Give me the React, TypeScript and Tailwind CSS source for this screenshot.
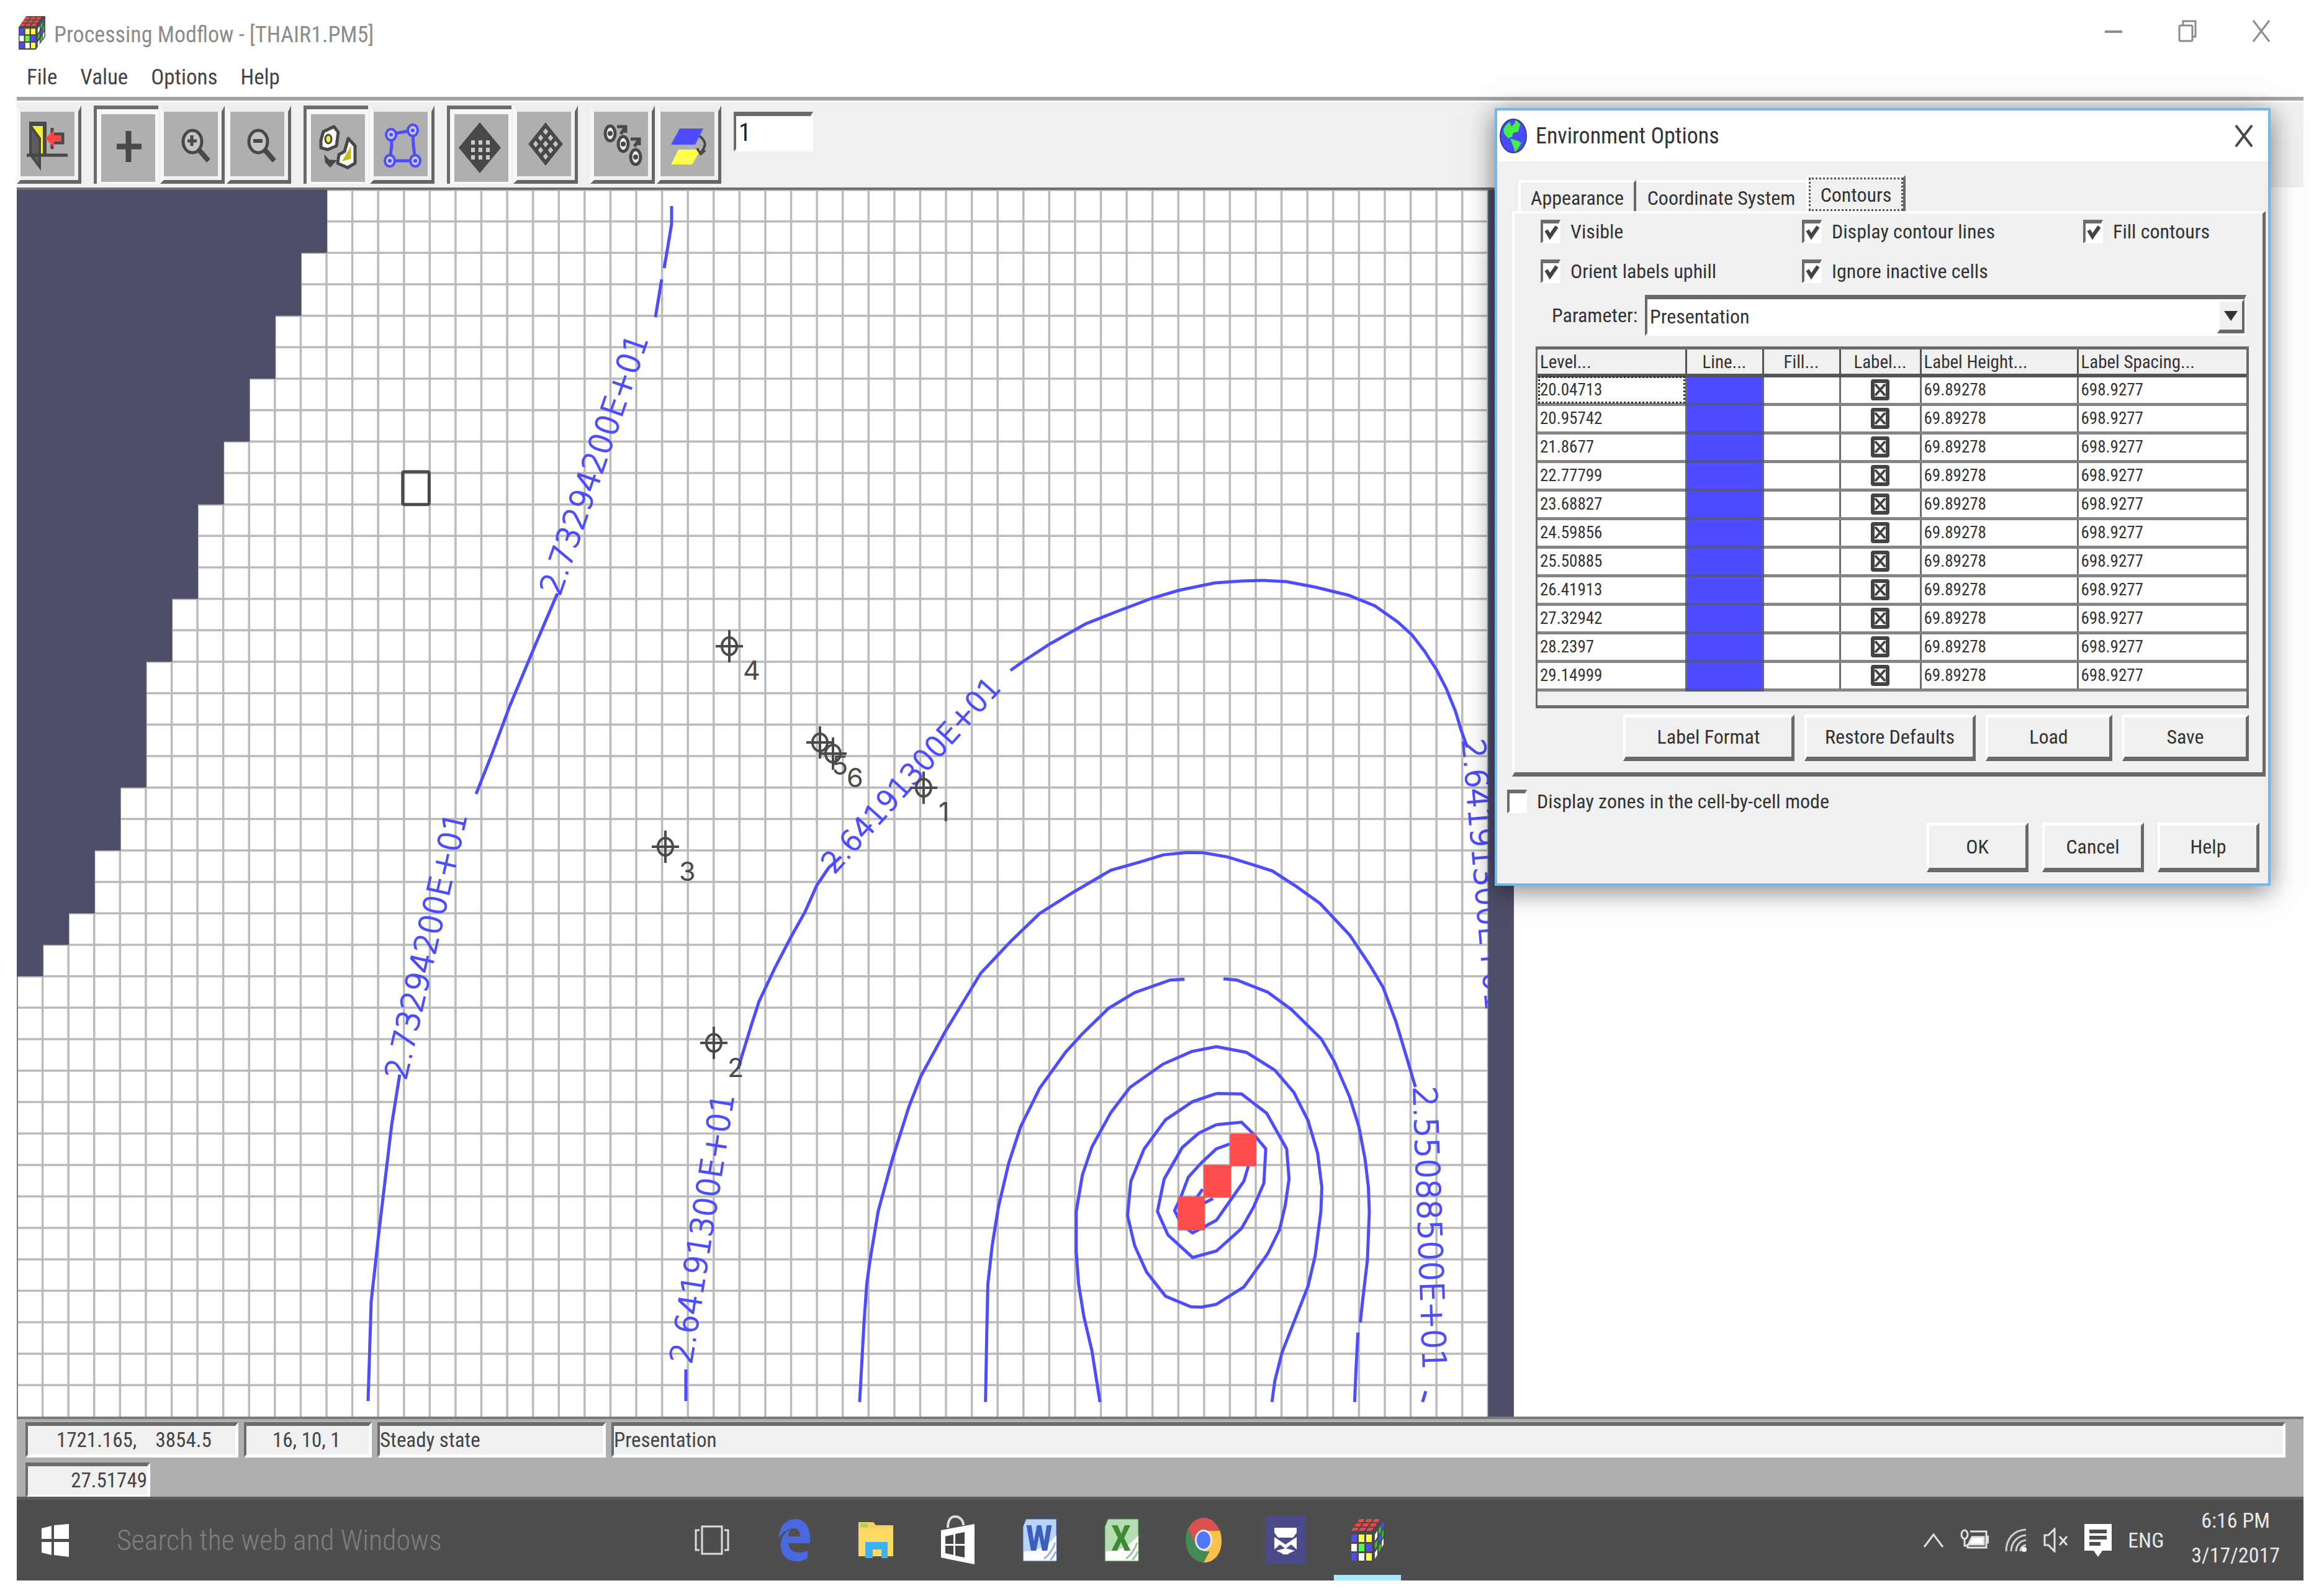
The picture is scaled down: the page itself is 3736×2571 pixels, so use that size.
import type { ReactNode } from "react";

const COLS = 58;
const ROWS = 39;
const MAP = { x: 27, y: 305, w: 2412, h: 1976 };
const CW = MAP.w / COLS;
const CH = MAP.h / ROWS;
const BLUE = "#4d4dff";
const INK = "#4a4a4a";

/* Inactive rows per column, from the left edge of the grid. */
const INACTIVE = [25, 24, 23, 21, 19, 15, 13, 10, 8, 6, 4, 2];

const colX = (c: number) => MAP.x + c * CW;
const rowY = (r: number) => MAP.y + r * CH;

const CONTOURS = [
  "111,1472 120,1280 126,1180 133,1120 150,1000 180,870 215,740 240,665 291,555 366,410 430,330 490,262 560,210 640,155 700,135 750,117 800,111 835,112 885,122 930,138 980,157 1030,195 1080,237 1143,316 1185,390 1213,445 1240,530 1268,640 1281,692",
  "376,1472 379,1280 381,1180 390,1085 403,990 425,880 450,790 490,695 545,605 580,560 635,497 690,458 765,427 795,425",
  "877,424 905,427 970,457 1020,500 1083,573 1110,628 1142,715 1162,790 1175,870 1182,940 1184,1000 1180,1120 1170,1220 1165,1275",
  "1160,1300 1156,1390 1153,1472",
  "617,1472 600,1345 583,1260 572,1180 567,1100 567,1000 580,910 600,840 640,755 680,693 750,635 810,604 862,592 925,606 985,650 1025,705 1055,775 1075,855 1084,940 1082,1000 1070,1110 1055,1185 1030,1260 1000,1350 985,1420 979,1472",
  "862,708 915,709 968,757 1010,845 1015,920 1007,985 995,1045 970,1105 920,1187 862,1230 830,1237 808,1236 755,1210 715,1150 690,1085 675,1010 682,925 710,845 755,773 812,728 862,708",
  "862,785 915,779 940,808 966,845 962,930 940,990 915,1042 862,1098 812,1114 760,1058 738,1000 752,920 790,842 825,806 862,785",
  "890,833 862,845 830,880 803,915 787,965 774,998 790,1035 812,1053 862,1022 890,975 920,925 930,885 935,860",
  "833,945 815,975 800,1000 835,980 855,968",
  "1303,1445 1296,1472",
];

const OUTER_CONTOURS = [
  "1082,331 1082,360 1076,396 1070,431",
  "1066,449 1056,510",
  "898,955 862,1039 821,1137 792,1215 767,1278",
  "644,1730 631,1811 610,1988 598,2096 593,2256",
  "1105,2256 1105,2205",
  "1189,1721 1195,1701 1210,1652 1223,1612 1249,1557 1274,1509 1297,1468 1316,1425 1335,1397 1355,1379",
  "1628,1079 1649,1064 1692,1036 1749,1004 1797,985 1855,963 1899,950 1957,938 2000,935 2035,934 2073,936 2120,945 2173,958 2215,975 2252,1001 2275,1022 2295,1048 2315,1079 2330,1108 2345,1145 2354,1175 2364,1203",
];

const CONTOUR_LABELS = [
  { t: "2.73294200E+01", x: 902, y: 960, a: -71, s: 50 },
  { t: "2.73294200E+01", x: 654, y: 1740, a: -77, s: 50 },
  { t: "2.64191300E+01", x: 1114, y: 2197, a: -81, s: 50 },
  { t: "2.64191300E+01", x: 1344, y: 1408, a: -48, s: 46 },
  { t: "2.55088500E+01", x: 2277, y: 1750, a: 88, s: 52 },
  { t: "2.64191300E+01", x: 2356, y: 1191, a: 85, s: 50 },
];

const WELLS = [
  { n: "4", x: 1175, y: 1040, tx: 1197, ty: 1094 },
  { n: "5", x: 1321, y: 1195, tx: 1340, ty: 1247 },
  { n: "6", x: 1342, y: 1213, tx: 1364, ty: 1267 },
  { n: "1", x: 1488, y: 1268, tx: 1512, ty: 1322 },
  { n: "3", x: 1072, y: 1363, tx: 1094, ty: 1418 },
  { n: "2", x: 1150, y: 1679, tx: 1172, ty: 1734 },
];

const LEVELS = [
  "20.04713", "20.95742", "21.8677", "22.77799", "23.68827", "24.59856",
  "25.50885", "26.41913", "27.32942", "28.2397", "29.14999",
];

function ModelMap() {
  return (
    <svg
      role="img"
      aria-label="Model grid with head contours"
      viewBox="27 305 2412 1976"
      preserveAspectRatio="none"
      className="block h-[1976px] w-[65.47%] bg-white"
    >
      <g stroke="#bababa" strokeWidth="3.5">
        {Array.from({ length: COLS }, (_, c) => (
          <line key={c} x1={colX(c)} x2={colX(c)} y1={MAP.y} y2={MAP.y + MAP.h} />
        ))}
        {Array.from({ length: ROWS }, (_, r) => (
          <line key={r} x1={MAP.x} x2={MAP.x + MAP.w} y1={rowY(r)} y2={rowY(r)} />
        ))}
      </g>
      <line x1="28" x2="28" y1={MAP.y} y2={MAP.y + MAP.h} stroke="#7c7c7c" strokeWidth="2" />
      <g fill="#4e4e69">
        {INACTIVE.map((n, c) => (
          <rect key={c} x={colX(c)} y={MAP.y} width={CW + 1} height={n * CH} />
        ))}
      </g>
      <g fill="none" stroke={BLUE} strokeWidth="5">
        <g transform="translate(1300 1300) scale(.7653 .6505)">
          {CONTOURS.map((p) => (
            <polyline key={p} points={p} vectorEffect="non-scaling-stroke" />
          ))}
        </g>
        {OUTER_CONTOURS.map((p) => (
          <polyline key={p} points={p} />
        ))}
      </g>
      <g fill={BLUE} stroke={BLUE} strokeWidth="2" className="font-['DejaVu_Sans',sans-serif] font-extralight">
        {CONTOUR_LABELS.map((l, i) => (
          <text key={i} fontSize={l.s} transform={`translate(${l.x} ${l.y}) rotate(${l.a})`}>{l.t}</text>
        ))}
      </g>
      <rect x={colX(57)} y={MAP.y} width={CW} height={MAP.h} fill="#4e4e69" />
      <g fill="#ff4d4d">
        <rect x={colX(45) - 1} y={rowY(32)} width={CW + 2} height={CH + 4} />
        <rect x={colX(46) - 1} y={rowY(31)} width={CW + 3} height={CH + 2} />
        <rect x={colX(47)} y={rowY(30)} width={CW + 1} height={CH + 2} />
      </g>
      <rect x={colX(15) - 2} y={rowY(9) - 2} width={CW + 1} height={CH + 2} fill="none" stroke={INK} strokeWidth="5" rx="2" />
      {WELLS.map((w) => (
        <g key={w.n}>
          <g stroke={INK} strokeWidth="4" fill="none">
            <ellipse cx={w.x} cy={w.y} rx="12" ry="14" />
            <path d={`M${w.x - 22} ${w.y}h44M${w.x} ${w.y - 26}v52`} />
          </g>
          <text x={w.tx} y={w.ty} fontSize="43" fill={INK} className="font-['Inter',sans-serif]">{w.n}</text>
        </g>
      ))}
    </svg>
  );
}

function ToolButton({ label, pressed, view, children }: { label: string; pressed?: boolean; view: string; children: ReactNode }) {
  return (
    <button
      type="button"
      aria-label={label}
      aria-pressed={!!pressed}
      className={
        "flex h-[126px] w-[104px] items-center justify-center bg-[#afafaf] " +
        (pressed
          ? "border-l-[5px] border-t-[6px] border-l-[#6b6b6b] border-t-[#6b6b6b] shadow-[inset_7px_8px_0_#f7f7f7,inset_-5px_-3px_0_#f7f7f7]"
          : "border-b-[6px] border-l-[6px] border-r-[5px] border-t-[10px] border-b-[#666] border-l-[#f7f7f7] border-r-[#666] border-t-[#ededed] shadow-[inset_-6px_-6px_0_#f1f1f1]")
      }
    >
      <svg viewBox={view} className="h-[100px] w-[84px] shrink-0" fill="none" aria-hidden="true">{children}</svg>
    </button>
  );
}

const BLACK = "#484848";

function Toolbar() {
  return (
    <div role="toolbar" aria-label="Tools" className="flex h-[140px] items-start gap-5 border-t-[3px] border-white bg-[#f0f0f0] pt-[5px]">
      <ToolButton label="Leave editor" view="37 184 84 100">
        <path d="M49 198h22v50H49z" fill={BLACK} stroke={BLACK} strokeWidth="6" />
        <path d="M51 202h17v45h-5v-28z" fill="#f4ee3a" />
        <path d="M48 203l15 19v46l-15-20z" fill="#5c5c5c" stroke={BLACK} strokeWidth="4" />
        <path d="M42 249h66" stroke={BLACK} strokeWidth="5" />
        <path d="M83 205v34M83 215h17v14H83" stroke={BLACK} strokeWidth="5" />
        <path d="M72 222l14-13v8h11v10H86v9z" fill="#ff4646" />
      </ToolButton>
      <div className="flex gap-[3px]">
        <ToolButton label="Assign value" pressed view="162 184 84 100">
          <path d="M186 234h40M205 209v50" stroke={BLACK} strokeWidth="9" />
        </ToolButton>
        <ToolButton label="Zoom in" view="266 184 84 100">
          <ellipse cx="307" cy="227" rx="15" ry="18" fill="#c4c4c4" stroke={BLACK} strokeWidth="5" />
          <path d="M299 226h15M306 217v17" stroke={BLACK} strokeWidth="5" />
          <path d="M318 241l15 17" stroke={BLACK} strokeWidth="8" />
        </ToolButton>
        <ToolButton label="Zoom out" view="370 184 84 100">
          <ellipse cx="410" cy="227" rx="15" ry="18" fill="#c4c4c4" stroke={BLACK} strokeWidth="5" />
          <path d="M402 226h15" stroke={BLACK} strokeWidth="6" />
          <path d="M421 241l15 17" stroke={BLACK} strokeWidth="8" />
        </ToolButton>
      </div>
      <div className="flex gap-[3px]">
        <ToolButton label="Zones" pressed view="502 184 84 100">
          <path d="M538 202l7 9-3 22-14 6-11-3 0-12 4-14z" fill="#fff" stroke={BLACK} strokeWidth="5" strokeLinejoin="round" />
          <ellipse cx="529" cy="222" rx="5" ry="7" fill="#f4ee3a" stroke={BLACK} strokeWidth="3" />
          <path d="M561 221l11 12v28l-12 7-16-7 2-14 9-5z" fill="#fff" stroke={BLACK} strokeWidth="5" strokeLinejoin="round" />
          <path d="M556 254l7-12v10z" fill="#f4ee3a" stroke="#c4bc20" strokeWidth="5" />
          <path d="M522 246l8 9 13 1-11 12-8-8z" fill={BLACK} />
        </ToolButton>
        <ToolButton label="Polygons" view="604 184 84 100">
          <path d="M627 215l35-6 1 24 3 25h-41l3-25z" stroke={BLUE} strokeWidth="5" />
          <g fill="#c8c8ff" stroke={BLUE} strokeWidth="4">
            <ellipse cx="627" cy="216" rx="8" ry="9" /><ellipse cx="662" cy="209" rx="8" ry="9" />
            <ellipse cx="666" cy="258" rx="8" ry="9" /><ellipse cx="625" cy="258" rx="8" ry="9" />
          </g>
          <g fill={BLUE}><circle cx="627" cy="216" r="3" /><circle cx="662" cy="209" r="3" /><circle cx="666" cy="258" r="3" /><circle cx="625" cy="258" r="3" /></g>
        </ToolButton>
      </div>
      <div className="flex gap-[3px]">
        <ToolButton label="Cell by cell input" pressed view="735 184 84 100">
          <path d="M775 195l34 41-34 41-34-41z" fill={BLACK} />
          <g fill="#c8c8c8">
            {[761, 773, 785].map((x) => [224, 236, 248].map((y) => <rect key={`${x}-${y}`} x={x} y={y} width="6" height="7" />))}
          </g>
        </ToolButton>
        <ToolButton label="Grid outline" view="837 184 84 100">
          <path d="M878 201l24 30-24 30-24-30z" stroke={BLACK} strokeWidth="6" fill="#c4c4c4" />
          <path d="M870 211l24 30M862 221l24 30M886 211l-24 30M894 221l-24 30" stroke={BLACK} strokeWidth="6" />
        </ToolButton>
      </div>
      <div className="flex gap-[3px]">
        <ToolButton label="Duplicate cells" view="963 184 84 100">
          <g fill="#eee" stroke={BLACK} strokeWidth="5">
            <ellipse cx="984" cy="214" rx="8" ry="12" /><ellipse cx="1005" cy="231" rx="8" ry="12" /><ellipse cx="1025" cy="252" rx="8" ry="12" />
          </g>
          <g fill={BLACK}><circle cx="984" cy="214" r="4" /><circle cx="1005" cy="231" r="4" /><circle cx="1025" cy="252" r="4" /></g>
          <path d="M995 203h14v10M1009 203l-8 12M1017 223h14v10M1031 223l-8 12" stroke={BLACK} strokeWidth="5" />
        </ToolButton>
        <ToolButton label="Duplicate layers" view="1070 184 84 100">
          <path d="M1096 206h38l-13 26h-39z" fill={BLUE} />
          <path d="M1094 240h36l-14 24h-34z" fill="#ffff4d" />
          <path d="M1128 218c12 10 10 16 3 26M1124 238l6 9 7-6" stroke={BLACK} strokeWidth="4" />
        </ToolButton>
      </div>
      <input
        aria-label="Layer"
        defaultValue="1"
        className="mt-[10px] h-[64px] w-[128px] border-b-4 border-l-4 border-r-4 border-t-[7px] border-b-white border-l-[#6b6b6b] border-r-white border-t-[#6b6b6b] bg-white pl-1 text-[40px] leading-10 text-[#222]"
      />
    </div>
  );
}

function CubeIcon({ className }: { className: string }) {
  const front = ["#4d4dff", "#ffff4d", "#ffff4d", "#fff", "#4dff4d", "#4d4dff", "#4d4dff", "#fff", "#ffff4d"];
  return (
    <svg viewBox="0 0 56 72" preserveAspectRatio="none" className={className} aria-hidden="true">
      <path d="M0 24L16 0h40v44L36 72H0z" fill="#4a4a4a" />
      {front.map((f, i) => (
        <rect key={i} x={2 + (i % 3) * 12} y={27 + Math.floor(i / 3) * 15} width="9" height="12" fill={f} />
      ))}
      {[0, 1, 2].map((r) => [0, 1, 2].map((c) => (
        <path key={`${r}${c}`} d={`M${15 - r * 5 + c * 12} ${2 + r * 7}h9l-3 5h-9z`} fill="#f04848" />
      )))}
      <path d="M40 27l4-6v10l-4 6zM40 56l4-6v10l-4 6zM51 38l3-5v10l-3 5z" fill="#fff" />
      <path d="M40 41l4-6v10l-4 6zM46 46l4-6v10l-4 6zM51 24l3-5v10l-3 5zM46 18l4-6v10l-4 6z" fill="#38c038" />
      <path d="M51 10l3-5v10l-3 5zM46 32l4-6v10l-4 6z" fill="#4d4dff" />
    </svg>
  );
}

function CheckBox({ label, checked, className }: { label: string; checked?: boolean; className?: string }) {
  return (
    <label className={"flex items-center gap-4 " + (className ?? "")}>
      <span className="relative block h-[38px] w-8">
        <input
          type="checkbox"
          defaultChecked={checked}
          className="peer block h-full w-full appearance-none border-b-[3px] border-l-4 border-r-[3px] border-t-[6px] border-b-white border-l-[#6b6b6b] border-r-white border-t-[#6b6b6b] bg-white"
        />
        <svg viewBox="0 0 32 38" className="pointer-events-none absolute inset-0 hidden h-full w-full peer-checked:block" fill="none" aria-hidden="true">
          <path d="M9 17l6 10 11-16" stroke="#444" strokeWidth="6" />
        </svg>
      </span>
      <span>{label}</span>
    </label>
  );
}

function PushButton({ children, className }: { children: ReactNode; className: string }) {
  return (
    <button
      type="button"
      className={"border-b-[7px] border-l-4 border-r-[5px] border-t-[5px] border-b-[#696969] border-l-white border-r-[#696969] border-t-white bg-[#f0f0f0] text-center " + className}
    >
      {children}
    </button>
  );
}

function EnvironmentDialog() {
  return (
    <section
      role="dialog"
      aria-label="Environment Options"
      className="absolute right-[78px] top-[174px] w-[1250px] border-4 border-[#72b8ea] bg-[#f0f0f0] pb-[18px] text-[32px] leading-10 text-[#333] shadow-[0_8px_40px_rgba(0,0,0,0.5)]"
    >
      <header className="flex h-[82px] items-center bg-white pl-1 pr-6 text-[36px]">
        <svg viewBox="0 0 44 56" className="h-14 w-11" aria-hidden="true">
          <ellipse cx="22" cy="28" rx="21" ry="27" fill="#4a4aff" stroke="#3b3b8a" strokeWidth="2" />
          <path d="M9 12l7-7 3 8 5-5 2-6 7 7-3 12-8 2-2 6-6 3-7-8-1-6z" fill="#45f045" />
          <path d="M17 32l12 4 6 3-5 9-5 6-3-9z" fill="#45f045" />
        </svg>
        <h2 className="ml-[14px]">Environment Options</h2>
        <button type="button" aria-label="Close" className="ml-auto">
          <svg viewBox="0 0 30 36" className="h-9 w-[30px]" aria-hidden="true"><path d="M2 1l26 34M28 1L2 35" stroke="#484848" strokeWidth="4" /></svg>
        </button>
      </header>

      <div role="tablist" className="mt-[26px] flex h-[54px] items-end pl-[34px]">
        <button role="tab" type="button" className="h-[50px] w-[190px] border-l-4 border-r-4 border-t-4 border-l-white border-r-[#696969] border-t-white pt-1">Appearance</button>
        <button role="tab" type="button" className="h-[50px] w-[274px] border-t-4 border-white pt-1">Coordinate System</button>
        <button role="tab" type="button" aria-selected="true" className="h-[58px] w-[160px] border-l-4 border-r-4 border-t-4 border-l-white border-r-[#696969] border-t-white">
          <span className="block h-full border-[3px] border-dotted border-[#555] leading-[50px]">Contours</span>
        </button>
      </div>

      <div role="tabpanel" className="ml-[24px] mr-1 border-b-[7px] border-l-4 border-r-[5px] border-t-4 border-b-[#696969] border-l-white border-r-[#696969] border-t-white pb-[18px] pl-[34px] pr-[22px] pt-[9px]">
        <div className="grid grid-cols-[421px_453px_1fr] gap-y-[24px] pl-2">
          <CheckBox label="Visible" checked />
          <CheckBox label="Display contour lines" checked />
          <CheckBox label="Fill contours" checked />
          <CheckBox label="Orient labels uphill" checked />
          <CheckBox label="Ignore inactive cells" checked />
        </div>

        <div className="mt-[18px] flex items-center pl-[26px]">
          <label htmlFor="parameter" className="w-[150px]">Parameter:</label>
          <div className="relative mr-1 flex-1">
            <select id="parameter" className="h-[66px] w-full appearance-none border-b-4 border-l-4 border-r-[3px] border-t-[7px] border-b-white border-l-[#696969] border-r-white border-t-[#696969] bg-white pl-1">
              <option>Presentation</option>
            </select>
            <span className="pointer-events-none absolute bottom-1 right-[3px] top-[7px] flex w-[44px] items-center justify-center border-b-[6px] border-l-4 border-r-4 border-t-4 border-b-[#696969] border-l-white border-r-[#696969] border-t-white bg-[#f0f0f0]">
              <svg viewBox="0 0 22 16" className="h-4 w-[22px]" aria-hidden="true"><path d="M0 0h22L11 16z" fill="#333" /></svg>
            </span>
          </div>
        </div>

        <div className="mt-[17px] border-b-[5px] border-l-[3px] border-r-[4px] border-t-[5px] border-[#6b6b6b] bg-[#f0f0f0] pb-[22px]">
          <table className="w-full table-fixed border-collapse bg-white text-[27px] leading-[30px]">
            <colgroup>
              <col className="w-[239px]" /><col className="w-[124px]" /><col className="w-[124px]" /><col className="w-[130px]" /><col className="w-[253px]" /><col />
            </colgroup>
            <thead>
              <tr className="h-[42px] border-b-[6px] border-[#555] bg-[#f0f0f0] text-[29px]">
                <th className="border-r-[3px] border-[#555] pl-1 text-left font-normal">Level...</th>
                <th className="border-r-[3px] border-[#555] font-normal">Line...</th>
                <th className="border-r-[3px] border-[#555] font-normal">Fill...</th>
                <th className="border-r-[3px] border-[#555] font-normal">Label...</th>
                <th className="border-r-[3px] border-[#555] pl-1 text-left font-normal">Label Height...</th>
                <th className="pl-1 text-left font-normal">Label Spacing...</th>
              </tr>
            </thead>
            <tbody>
              {LEVELS.map((level, i) => (
                <tr key={level} className="h-[46px] border-b-[5px] border-[#858585]">
                  <td className={"border-r-[3px] border-[#6b6b6b] pl-1 " + (i === 0 ? "outline-[3px] -outline-offset-4 outline-dotted outline-[#333]" : "")}>{level}</td>
                  <td className="border-r-[3px] border-r-[#6b6b6b] border-b-[5px] border-b-[#55558a] bg-[#4d4dff]" />
                  <td className="border-r-[3px] border-[#6b6b6b]" />
                  <td className="border-r-[3px] border-[#6b6b6b]">
                    <span className="relative mx-auto block h-[34px] w-[30px]">
                      <input type="checkbox" defaultChecked aria-label={`Label ${level}`} className="peer block h-full w-full appearance-none rounded-sm border-[6px] border-[#444] bg-white" />
                      <svg viewBox="0 0 30 34" className="pointer-events-none absolute inset-0 hidden h-full w-full peer-checked:block" aria-hidden="true">
                        <path d="M7 8l16 18M23 8L7 26" stroke="#444" strokeWidth="4" />
                      </svg>
                    </span>
                  </td>
                  <td className="border-r-[3px] border-[#6b6b6b] pl-1">69.89278</td>
                  <td className="pl-1">698.9277</td>
                </tr>
              ))}
            </tbody>
          </table>
        </div>

        <div className="mt-[10px] flex justify-end gap-4">
          <PushButton className="h-[75px] w-[276px]">Label Format</PushButton>
          <PushButton className="h-[75px] w-[276px]">Restore Defaults</PushButton>
          <PushButton className="h-[75px] w-[204px]">Load</PushButton>
          <PushButton className="h-[75px] w-[204px]">Save</PushButton>
        </div>
      </div>

      <CheckBox label="Display zones in the cell-by-cell mode" className="ml-4 mt-[20px]" />
      <div className="mr-[14px] mt-[14px] flex justify-end gap-[22px]">
        <PushButton className="h-[80px] w-[164px]">OK</PushButton>
        <PushButton className="h-[80px] w-[164px]">Cancel</PushButton>
        <PushButton className="h-[80px] w-[164px]">Help</PushButton>
      </div>
    </section>
  );
}

function StatusCell({ children, className }: { children: ReactNode; className: string }) {
  return (
    <div className={"h-[57px] whitespace-pre border-b-[5px] border-l-4 border-r-[5px] border-t-[6px] border-b-white border-l-[#6b6b6b] border-r-white border-t-[#6b6b6b] bg-[#f0f0f0] leading-[46px] " + className}>
      {children}
    </div>
  );
}

function TaskIcon({ label, children, active }: { label: string; children: ReactNode; active?: boolean }) {
  return (
    <button type="button" aria-label={label} className={"flex h-full w-[108px] items-center justify-center " + (active ? "border-b-[9px] border-[#a5eaff] pt-[9px]" : "")}>
      {children}
    </button>
  );
}

function OfficeIcon({ letter, ink, tint }: { letter: string; ink: string; tint: string }) {
  return (
    <svg viewBox="0 0 58 72" className="h-[72px] w-[58px]" aria-hidden="true">
      <path d="M7 2h49v68H2V14z" fill={tint} stroke={ink} strokeWidth="1" />
      <path d="M3 54c18 0 38-6 53-26v41H3z" fill="#fff" />
      <path d="M36 66c8-6 14-14 18-26M46 68c4-4 7-8 9-14" stroke={ink} strokeWidth="3" fill="none" opacity=".5" />
      <text x="28" y="53" textAnchor="middle" fontSize="58" fill={ink} className="font-['Roboto_Condensed',sans-serif] font-bold">{letter}</text>
    </svg>
  );
}

function Taskbar() {
  return (
    <footer className="flex h-[135px] items-stretch border-t-[5px] border-[#5c5c5c] bg-[#4e4e4e] text-[34px] text-[#e8e8e8]">
      <button type="button" aria-label="Start" className="flex w-[129px] items-center pl-[40px]">
        <svg viewBox="0 0 44 53" className="h-[53px] w-11" fill="#fff" aria-hidden="true">
          <path d="M0 7l16-4v21H0zM20 2l24-2v24H20zM0 29h16v21L0 46zM20 29h24v24l-24-3z" />
        </svg>
      </button>
      <input aria-label="Search" placeholder="Search the web and Windows" className="w-[937px] bg-transparent pl-8 text-[46px] font-light placeholder:text-[#7f7f7f]" />
      <div className="flex gap-6">
        <TaskIcon label="Task view">
          <svg viewBox="0 0 56 48" className="h-12 w-14" fill="none" stroke="#ddd" strokeWidth="3" aria-hidden="true">
            <rect x="12" y="2" width="32" height="44" /><path d="M8 8H2v32h6M48 8h6v32h-6" />
          </svg>
        </TaskIcon>
        <TaskIcon label="Edge">
          <svg viewBox="0 0 52 68" className="h-[68px] w-[52px]" aria-hidden="true">
            <path d="M1 31C3 12 13 0 28 0c16 0 24 13 24 30v9H17c1 10 8 15 17 15 6 0 10-1 14-3v12c-5 3-11 5-18 5C14 68 5 57 5 42c0-12 6-21 16-26-3 4-4 7-4 12h19c0-8-3-13-10-13C16 15 7 21 1 31z" fill="#4a68e0" />
          </svg>
        </TaskIcon>
        <TaskIcon label="File Explorer">
          <svg viewBox="0 0 58 62" className="h-[62px] w-[58px]" aria-hidden="true">
            <path d="M1 2h24l4 5h28v50H1z" fill="#f8d05c" /><path d="M4 4h12v6H4z" fill="#9fd46a" /><path d="M1 12h56v45H1z" fill="#ffd966" />
            <path d="M12 34h36v26H38V46H24v14H12z" fill="#3fb0f0" />
          </svg>
        </TaskIcon>
        <TaskIcon label="Store">
          <svg viewBox="0 0 56 80" className="h-20 w-14" aria-hidden="true">
            <path d="M12 20C12 6 18 2 24 2s13 5 13 14" stroke="#ddd" strokeWidth="4" fill="none" />
            <path d="M1 24l54-10v65L1 68z" fill="#fff" />
            <path d="M8 34l13-3v15H8zM24 30l15-3v19H24zM8 49h13v15L8 61zM24 49h15v19l-15-3z" fill="#444" />
          </svg>
        </TaskIcon>
        <TaskIcon label="Word"><OfficeIcon letter="W" ink="#3a5fc0" tint="#b9d2f5" /></TaskIcon>
        <TaskIcon label="Excel"><OfficeIcon letter="X" ink="#3f8a34" tint="#b5deb4" /></TaskIcon>
        <TaskIcon label="Chrome">
          <svg viewBox="0 0 58 72" preserveAspectRatio="none" className="h-[72px] w-[58px]" aria-hidden="true">
            <path d="M29 20h26c8 22 0 52-26 52z" fill="#fcc04c" />
            <path d="M4 16l12 26 13 12h10L29 72C4 70-6 40 4 16z" fill="#448a54" />
            <path d="M4 18C10 6 19 0 29 0c12 0 21 8 26 21H29L15 40z" fill="#dc5050" />
            <ellipse cx="29" cy="36" rx="14" ry="17" fill="#e8e8e8" /><ellipse cx="29" cy="36" rx="11" ry="14" fill="#4d78ff" />
          </svg>
        </TaskIcon>
        <TaskIcon label="Mail">
          <svg viewBox="0 0 64 78" className="h-[78px] w-16" aria-hidden="true">
            <path d="M0 0h64v78H0z" fill="#4b4b8c" />
            <path d="M14 19h36v8l-6 8H20l-6-8z" fill="#fff" />
            <path d="M14 34l6 4 12 8 12-8 6-4v20l-9-8-9 7-9-7-9 8z" fill="#fff" />
            <path d="M17 56l15-4 15 4-9 4-2 2h-8l-2-2z" fill="#fff" />
          </svg>
        </TaskIcon>
        <TaskIcon label="Processing Modflow" active><CubeIcon className="h-[72px] w-14" /></TaskIcon>
      </div>
      <div className="ml-auto flex items-center gap-[26px] pr-[38px]">
        <button type="button" aria-label="Show hidden icons">
          <svg viewBox="0 0 34 26" className="h-[26px] w-[34px]" aria-hidden="true"><path d="M2 24L17 4l15 20" stroke="#e0e0e0" strokeWidth="3" fill="none" /></svg>
        </button>
        <svg viewBox="0 0 46 38" className="h-[38px] w-[46px]" fill="none" stroke="#e0e0e0" strokeWidth="3" aria-label="Battery">
          <path d="M16 5h26v26H12v-6M42 13h3v10h-3M7 16v12h5" /><ellipse cx="7" cy="10" rx="5" ry="7" /><path d="M19 14h19v12H13z" fill="#fff" />
        </svg>
        <svg viewBox="0 0 36 40" className="h-10 w-9" fill="none" stroke="#cfcfcf" strokeWidth="3" aria-label="Network">
          <path d="M2 38C2 18 14 4 34 3M10 38c0-14 10-25 24-26M18 38c0-9 6-17 16-18M25 38c0-5 3-9 9-10" /><circle cx="31" cy="35" r="4" fill="#fff" stroke="none" />
        </svg>
        <svg viewBox="0 0 40 40" className="h-10 w-10" fill="none" stroke="#e0e0e0" strokeWidth="3" aria-label="Muted">
          <path d="M2 12h6L18 2v36L8 28H2zM26 14l12 14M38 14L26 28" />
        </svg>
        <svg viewBox="0 0 44 53" className="h-[53px] w-11" aria-label="Notifications">
          <path d="M0 0h44v43H29l-7 10-7-10H0z" fill="#fff" /><path d="M8 12h28M8 22h28M8 32h18" stroke="#4e4e4e" strokeWidth="6" />
        </svg>
        <span>ENG</span>
        <div className="-mt-2 ml-[18px] text-center leading-[56px]"><div>6:16 PM</div><div>3/17/2017</div></div>
      </div>
    </footer>
  );
}

export default function App() {
  return (
    <main className="relative min-h-screen bg-white pb-[25px] pl-[27px] pr-[25px] font-['Roboto_Condensed','Liberation_Sans',sans-serif] text-[#444]">
      <header className="flex h-[96px] items-center text-[36px] text-[#8c8c8c]">
        <CubeIcon className="mb-[-10px] ml-[3px] h-[54px] w-[43px]" />
        <h1 className="ml-[14px] mt-[16px]">Processing Modflow - [THAIR1.PM5]</h1>
        <div className="ml-auto flex items-center gap-[90px] pr-[54px] pt-1">
          <button type="button" aria-label="Minimize"><svg viewBox="0 0 28 36" className="h-9 w-7"><path d="M0 19h28" stroke="#8c8c8c" strokeWidth="4" /></svg></button>
          <button type="button" aria-label="Restore">
            <svg viewBox="0 0 30 36" className="h-9 w-[30px]" fill="none" stroke="#8c8c8c" strokeWidth="3"><rect x="2" y="9" width="21" height="25" rx="2" /><path d="M8 8V2h20v25h-5" /></svg>
          </button>
          <button type="button" aria-label="Close window"><svg viewBox="0 0 28 36" className="h-9 w-7"><path d="M1 1l26 34M27 1L1 35" stroke="#8c8c8c" strokeWidth="3" /></svg></button>
        </div>
      </header>
      <nav className="flex h-[66px] items-center gap-[37px] border-b-[6px] border-[#a4a4a4] pb-[2px] pl-4 text-[35px]">
        <button type="button">File</button>
        <button type="button">Value</button>
        <button type="button">Options</button>
        <button type="button">Help</button>
      </nav>
      <Toolbar />
      <div className="h-1 w-[65.47%] bg-[#6f6f6f]" />
      <ModelMap />
      <section aria-label="Status" className="h-[129px] border-t-4 border-[#7a7a7a] bg-[#afafaf] pl-[14px] pr-[29px] pt-[5px] text-[33px]">
        <div className="flex gap-[9px]">
          <StatusCell className="w-[343px] pl-[46px]">1721.165,{"    "}3854.5</StatusCell>
          <StatusCell className="w-[206px] pl-[42px]">16, 10, 1</StatusCell>
          <StatusCell className="w-[368px]">Steady state</StatusCell>
          <StatusCell className="flex-1">Presentation</StatusCell>
        </div>
        <StatusCell className="mt-2 w-[201px] text-right">27.51749</StatusCell>
      </section>
      <Taskbar />
      <EnvironmentDialog />
    </main>
  );
}
